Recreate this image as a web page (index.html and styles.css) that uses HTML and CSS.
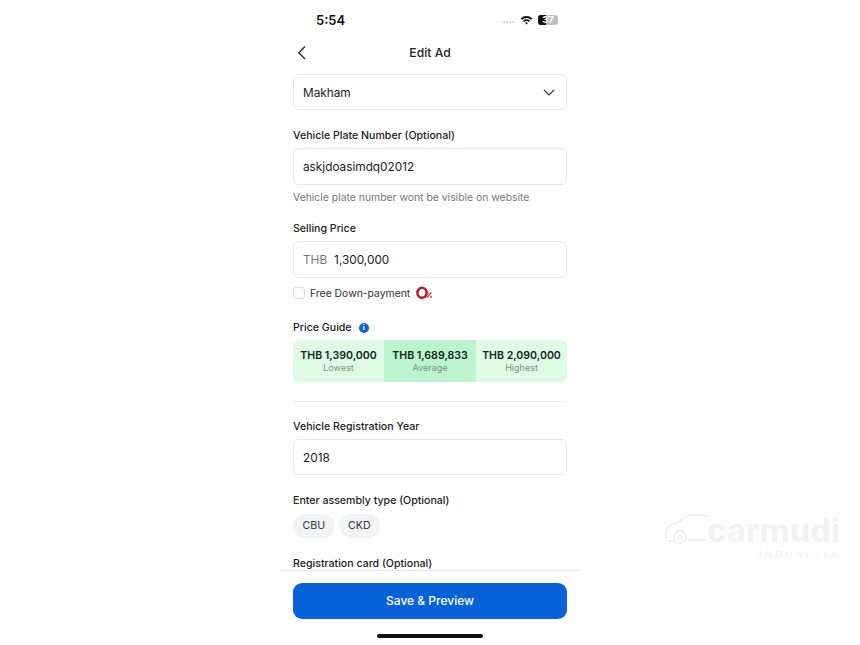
FILE: index.html
```html
<!DOCTYPE html>
<html lang="en">
<head>
  <meta charset="UTF-8">
  <title>Edit Ad</title>
  <link rel="stylesheet" href="styles.css">
</head>
<body>

  <div class="phone">
    <div class="status-bar">
      <span class="time">5:54</span>
      <div class="status-icons">
        <span class="signal"><i></i><i></i><i></i><i></i></span>
        <svg class="wifi" width="13" height="10" viewBox="0 0 13 10">
          <path d="M0.6 3.4A8.4 8.4 0 0 1 12.4 3.4L11 4.8A6.4 6.4 0 0 0 2 4.8Z" fill="#111"/>
          <path d="M3 5.7A5 5 0 0 1 10 5.7L8.7 7A3.2 3.2 0 0 0 4.3 7Z" fill="#111"/>
          <path d="M5.2 7.9A1.8 1.8 0 0 1 7.8 7.9L6.5 9.6Z" fill="#111"/>
        </svg>
        <span class="battery"><span class="battery-fill"></span><span class="battery-num">37</span></span>
      </div>
    </div>

    <div class="nav-bar">
      <svg class="back" width="10" height="16" viewBox="0 0 10 16">
        <path d="M8 1.5L1.8 7.8 8 14" fill="none" stroke="#222" stroke-width="1.3"/>
      </svg>
      <span class="nav-title">Edit Ad</span>
    </div>

    <div class="form">
      <div class="field select-field">
        <span>Makham</span>
        <svg width="12" height="7" viewBox="0 0 12 7">
          <path d="M1 1l5 5 5-5" fill="none" stroke="#333" stroke-width="1.2"/>
        </svg>
      </div>

      <label class="label plate-label">Vehicle Plate Number (Optional)</label>
      <div class="field tall">askjdoasimdq02012</div>
      <p class="hint">Vehicle plate number wont be visible on website</p>

      <label class="label price-label">Selling Price</label>
      <div class="field tall"><span class="prefix">THB</span>1,300,000</div>

      <div class="check-row">
        <span class="checkbox"></span>
        <span>Free Down-payment</span>
        <svg class="promo" width="17" height="14" viewBox="0 0 17 14">
          <ellipse cx="6" cy="6.8" rx="4.6" ry="5" fill="none" stroke="#bd1f2d" stroke-width="2.6"/>
          <path d="M11 11.5l4.5-5" stroke="#d9434f" stroke-width="1.3" fill="none"/>
          <circle cx="11.8" cy="7.5" r="1" fill="#d9434f"/>
          <circle cx="15" cy="11" r="1" fill="#d9434f"/>
        </svg>
      </div>

      <div class="label guide-label">
        Price Guide
        <span class="info">i</span>
      </div>
      <div class="guide">
        <div class="guide-col">
          <strong>THB 1,390,000</strong>
          <span>Lowest</span>
        </div>
        <div class="guide-col mid">
          <strong>THB 1,689,833</strong>
          <span>Average</span>
        </div>
        <div class="guide-col">
          <strong>THB 2,090,000</strong>
          <span>Highest</span>
        </div>
      </div>

      <hr class="divider">

      <label class="label year-label">Vehicle Registration Year</label>
      <div class="field year-field">2018</div>

      <label class="label assembly-label">Enter assembly type (Optional)</label>
      <div class="chips">
        <span class="chip">CBU</span>
        <span class="chip">CKD</span>
      </div>

      <label class="label card-label">Registration card (Optional)</label>
    </div>

    <div class="footer">
      <button class="save-btn">Save &amp; Preview</button>
      <div class="home-bar"></div>
    </div>
  </div>

  <div class="watermark">
    <svg width="46" height="34" viewBox="0 0 46 34">
      <path d="M1 27V20Q2 13 12 11L22 4Q28 2 44 4M10 29H3M24 28H42" fill="none" stroke="#f1f1f1" stroke-width="2"/>
      <circle cx="15" cy="25" r="6" fill="none" stroke="#f1f1f1" stroke-width="2"/>
      <circle cx="15" cy="25" r="2" fill="none" stroke="#f1f1f1" stroke-width="1.5"/>
    </svg>
    <div>
      <div class="wm-name">carmudi</div>
      <div class="wm-sub">INDONESIA</div>
    </div>
  </div>

</body>
</html>
```

FILE: styles.css
```css
html, body {
  margin: 0;
  padding: 0;
  height: 100%;
  background: white;
  overflow: hidden;
}

body {
  font-family: Inter, 'Liberation Sans', sans-serif;
  color: #222;
  font-size: 12px;
}

.phone {
  width: 300px;
  height: 645px;
  margin: 0 auto;
  display: flex;
  flex-direction: column;
}

.status-bar {
  height: 40px;
  flex: none;
  display: flex;
  justify-content: space-between;
  align-items: center;
  padding: 0 22px 0 36px;
}

.time {
  font-size: 13px;
  font-weight: 600;
  color: #111;
}

.status-icons {
  display: flex;
  align-items: center;
  gap: 5px;
}

.signal {
  display: flex;
  gap: 1px;
  margin-right: 1px;
  padding-top: 4px;
}

.signal i {
  width: 2px;
  height: 2px;
  border-radius: 50%;
  background: #ccc;
}

.battery {
  position: relative;
  width: 20px;
  height: 10px;
  border-radius: 3px;
  background: #bdbdbd;
  overflow: hidden;
}

.battery-fill {
  position: absolute;
  left: 0;
  top: 0;
  bottom: 0;
  width: 8px;
  background: #111;
}

.battery-num {
  position: absolute;
  left: 0;
  right: 0;
  top: 0;
  text-align: center;
  font-size: 9.5px;
  line-height: 10px;
  font-weight: 700;
  color: white;
}

.nav-bar {
  height: 26px;
  flex: none;
  position: relative;
  display: flex;
  align-items: center;
  justify-content: center;
}

.back {
  position: absolute;
  left: 17px;
  top: 5px;
}

.nav-title {
  font-size: 12.2px;
  font-weight: 500;
  padding-bottom: 2px;
}

.form {
  flex: 1;
  min-height: 0;
  overflow: hidden;
  padding: 8px 13px 0;
  border-bottom: 1px solid #e9e9e9;
}

.field {
  height: 36px;
  box-sizing: border-box;
  border: 1px solid #e8e8e8;
  border-radius: 6px;
  display: flex;
  align-items: center;
  padding: 0 9px;
  font-size: 11.8px;
}

.field.tall {
  height: 37px;
}

.select-field {
  justify-content: space-between;
  padding-right: 11px;
}

.select-field span,
.year-field {
  padding-top: 1px;
}

.label {
  display: block;
  font-size: 10.6px;
  font-weight: 500;
  line-height: 14px;
}

.plate-label { margin-top: 19px; margin-bottom: 5px; }
.price-label { margin-top: 17px; margin-bottom: 5px; }
.year-label { margin-top: 18px; margin-bottom: 5px; }
.assembly-label { margin-top: 19px; margin-bottom: 6px; }
.card-label { margin-top: 19px; }

.hint {
  margin: 6px 0 0;
  font-size: 10.4px;
  line-height: 14px;
  color: #777;
}

.prefix {
  color: #777;
  margin-right: 7px;
}

.check-row {
  display: flex;
  align-items: center;
  gap: 5px;
  font-size: 10.4px;
  margin-top: 8px;
  height: 14px;
  color: #333;
}

.promo {
  margin-left: 1px;
}

.checkbox {
  width: 10px;
  height: 10px;
  border: 1px solid #dcdcdc;
  border-radius: 3px;
}

.guide-label {
  display: flex;
  align-items: center;
  gap: 7px;
  margin-top: 21px;
  margin-bottom: 5px;
}

.info {
  width: 10px;
  height: 10px;
  border-radius: 50%;
  background: #1565c8;
  color: white;
  font-size: 7px;
  line-height: 10px;
  font-weight: 700;
  text-align: center;
}

.guide {
  display: grid;
  grid-template-columns: 91px 92px 91px;
  height: 42px;
  border-radius: 6px;
  overflow: hidden;
  background: #dffbe6;
}

.guide-col {
  display: flex;
  flex-direction: column;
  align-items: center;
  padding-top: 9px;
  box-sizing: border-box;
}

.guide-col.mid {
  background: #bcf4cf;
}

.guide-col strong {
  font-size: 10.6px;
  line-height: 14px;
  font-weight: 600;
  color: #10261a;
  white-space: nowrap;
}

.guide-col span {
  font-size: 9px;
  line-height: 10px;
  color: #7b9184;
}

.divider {
  border: none;
  border-top: 1px solid #ececec;
  margin: 19px 0 0;
}

.chips {
  display: flex;
  gap: 4px;
}

.chip {
  height: 24px;
  line-height: 24px;
  padding: 0 9.5px;
  border-radius: 12px;
  background: #f2f3f4;
  font-size: 10.6px;
  color: #333;
}

.footer {
  height: 74px;
  flex: none;
  box-sizing: border-box;
  padding: 12px 13px 0;
  display: flex;
  flex-direction: column;
  align-items: center;
}

.save-btn {
  width: 100%;
  height: 36px;
  border: none;
  border-radius: 9px;
  background: #0762da;
  color: white;
  font-family: inherit;
  font-size: 12px;
  font-weight: 500;
  padding: 0 0 2px;
}

.home-bar {
  width: 106px;
  height: 4px;
  border-radius: 2px;
  background: #111;
  margin-top: 15px;
}

/* faint logo over the page background */
.watermark {
  position: absolute;
  left: 665px;
  top: 512px;
  display: flex;
  gap: 0;
  color: #f2f2f2;
}

.wm-name {
  font-size: 33px;
  font-weight: 700;
  line-height: 36px;
  margin-left: -4px;
}

.wm-sub {
  font-size: 10px;
  letter-spacing: 3px;
  margin-top: 1px;
  text-align: right;
  font-family: 'Liberation Serif', serif;
}
```
